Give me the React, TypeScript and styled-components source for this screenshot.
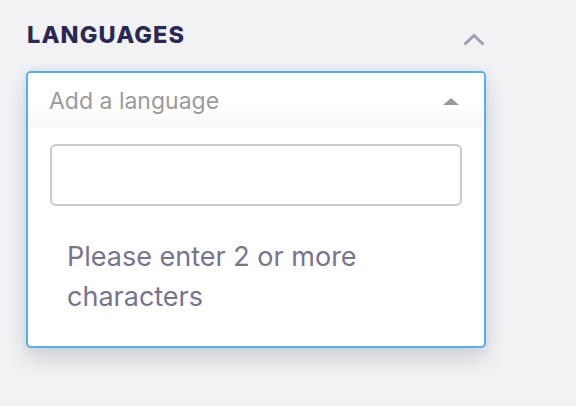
import React from "react";
import styled, { createGlobalStyle } from "styled-components";

const GlobalStyle = createGlobalStyle`
  html, body {
    margin: 0;
    padding: 0;
    background: #f2f2f5;
  }

  body {
    font-family: "Inter", "Liberation Sans", sans-serif;
  }
`;

const Page = styled.div`
  width: 576px;
  height: 406px;
  padding: 22px 90px 0 26px;
  box-sizing: border-box;
  overflow: hidden;
`;

const Header = styled.div`
  display: flex;
  align-items: center;
  justify-content: space-between;
  height: 26px;
  margin-bottom: 23px;
`;

const Title = styled.h3`
  margin: 0 0 0 1px;
  font-size: 23.5px;
  font-weight: 800;
  letter-spacing: 1.1px;
  color: #2a2953;
  line-height: 26px;
`;

const CollapseButton = styled.button`
  width: 24px;
  height: 16px;
  padding: 0;
  margin: 8px 0 0 0;
  border: none;
  background: none;
  display: flex;
  align-items: center;
  justify-content: center;
  cursor: pointer;
`;

const Select = styled.div`
  border: 2px solid #5dade2;
  border-radius: 5px;
  background: #fff;
  overflow: hidden;
  box-shadow:
    0 0 10px rgba(93, 173, 226, 0.25),
    0 12px 22px rgba(0, 0, 0, 0.12);
`;

const SelectHead = styled.div`
  height: 55px;
  display: flex;
  align-items: center;
  justify-content: space-between;
  padding: 0 25px 0 21px;
  background: linear-gradient(to bottom, #ffffff 60%, #f7f7f7 100%);
`;

const Placeholder = styled.span`
  font-size: 23px;
  color: #9a9a9a;
`;

const Caret = styled.span<{ open?: boolean }>`
  width: 0;
  height: 0;
  border-left: 8px solid transparent;
  border-right: 8px solid transparent;
  ${({ open }) =>
    open ? `border-bottom: 7px solid #999;` : `border-top: 7px solid #999;`}
  margin-top: 1px;
`;

const Dropdown = styled.div`
  padding: 16px 22px 0;
`;

const SearchField = styled.input`
  display: block;
  width: 100%;
  height: 62px;
  box-sizing: border-box;
  border: 2px solid #cccccc;
  border-radius: 6px;
  outline: none;
  font-size: 22px;
  padding: 0 14px;
  font-family: inherit;
`;

const Message = styled.p`
  margin: 0;
  padding: 31px 17px 29px;
  font-size: 27px;
  line-height: 40px;
  color: #76748f;
`;

const App = () => {
  return (
    <>
      <GlobalStyle />
      <Page>
        <Header>
          <Title>LANGUAGES</Title>
          <CollapseButton aria-label="Collapse">
            <svg width="22" height="13" viewBox="0 0 22 13">
              <path
                d="M1.5 11.5 L11 2.5 L20.5 11.5"
                fill="none"
                stroke="#a09eb2"
                strokeWidth="3"
              />
            </svg>
          </CollapseButton>
        </Header>
        <Select>
          <SelectHead>
            <Placeholder>Add a language</Placeholder>
            <Caret open />
          </SelectHead>
          <Dropdown>
            <SearchField type="search" />
            <Message>Please enter 2 or more characters</Message>
          </Dropdown>
        </Select>
      </Page>
    </>
  );
};

export default App;
